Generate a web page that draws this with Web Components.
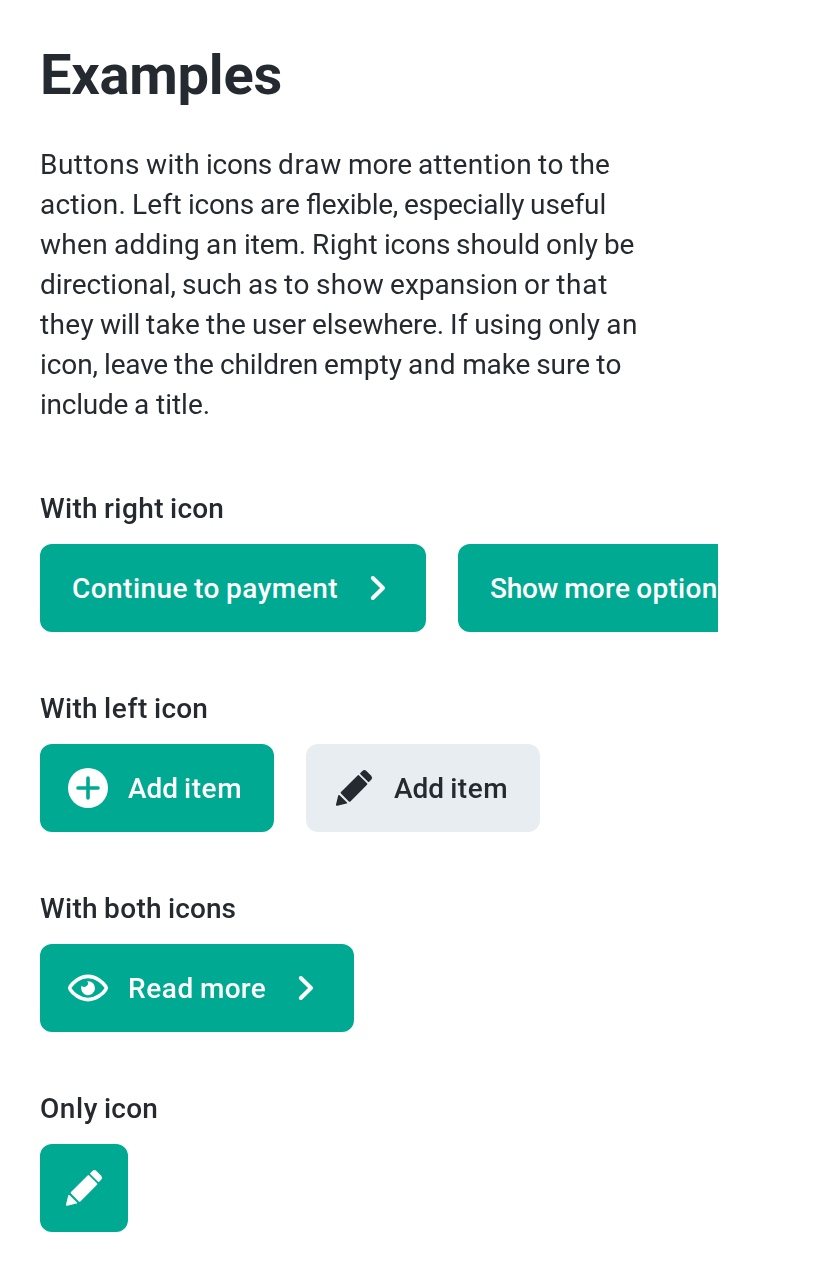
<!DOCTYPE html>
<html lang="en"><head><meta charset="utf-8"><title>Examples</title>
<style>html,body{margin:0;background:#fff}body{font-family:Roboto,sans-serif;color:#252a31;height:1272px;overflow:hidden}</style></head><body>
<examples-page></examples-page>
<script>
const ICONS={
right:'<path d="M9.4 7l5.100 5-5.100 5" fill="none" stroke="currentColor" stroke-width="2" stroke-linecap="round" stroke-linejoin="round"/>',
plus:'<path fill="currentColor" fill-rule="evenodd" d="M12 2a10 10 0 1 0 0 20 10 10 0 0 0 0-20zm.9 9.1H17a.9.9 0 0 1 0 1.8h-4.1V17a.9.9 0 0 1-1.8 0v-4.1H7a.9.9 0 0 1 0-1.8h4.1V7a.9.9 0 0 1 1.8 0z"/>',
edit:'<path fill="currentColor" d="M4.1 15.800q.2-.6.7-.2l3.7 3.6q.4.500-.2.600L3.600 20.900Q2.900 21 3 20.300zM13.800 5.700q.4-.4.8 0l3.900 3.900q.4.4 0 .8l-8.300 8.300q-.4.4-.8 0l-3.900-3.900q-.4-.4 0-.8zM15.200 4.500l1-1q1-.9 2 0l2.400 2.400q.9 1 0 2l-1 1q-.3.3-.6 0l-3.800-3.800q-.3-.3 0-.6z"/>',
eye:'<path d="M3.100 12.700Q2.600 12 3.100 11.300C4.500 9.200 7.800 6.200 12 6.200S19.500 9.200 20.900 11.300Q21.400 12 20.900 12.700C19.500 14.800 16.200 17.800 12 17.800S4.500 14.800 3.100 12.700z" fill="none" stroke="currentColor" stroke-width="1.800" stroke-linejoin="round"/><path fill="currentColor" d="M11.600 8.600A3.500 3.500 0 1 1 8.800 10.700A1.750 1.750 0 0 0 11.600 8.600z"/>'
};
/* Tracks each word so that its glyphs average whole-pixel advances. */
const pen=document.createElement('canvas').getContext('2d');
function fitted(text,font){
  pen.font=font;
  const w=s=>pen.measureText(s).width;
  const advance=g=>g==='e'&&font.startsWith('500')?8:Math.round(w(g));
  return text.split(' ').map(word=>{
    const glyphs=word.match(/fl|./g);
    const sum=glyphs.reduce((t,g)=>t+advance(g),0);
    return `<span style="letter-spacing:${((sum-w(word))/glyphs.length).toFixed(3)}px;font-feature-settings:'liga' 1">${word}</span>`;
  }).join(`<span style="word-spacing:${(Math.round(w(' '))-w(' ')).toFixed(3)}px"> </span>`);
}
class UiIcon extends HTMLElement{connectedCallback(){this.attachShadow({mode:'open'}).innerHTML=`<style>:host{display:block;width:24px;height:24px;flex:none}svg{display:block}</style><svg width="24" height="24" viewBox="0 0 24 24">${ICONS[this.getAttribute('name')]}</svg>`}}
customElements.define('ui-icon',UiIcon);
class UiButton extends HTMLElement{connectedCallback(){const l=this.getAttribute('left'),r=this.getAttribute('right');
if(this.textContent)this.innerHTML=`<span>${fitted(this.textContent,'500 14px Roboto')}</span>`;
this.attachShadow({mode:'open'}).innerHTML=`<style>:host{display:block;flex:none}button{box-sizing:border-box;height:44px;border:0;border-radius:6px;display:flex;align-items:center;background:#00a991;color:#fff;font:500 14px/20px Roboto,sans-serif;white-space:nowrap;padding:0 ${r?'12px':'16px'} 0 ${l?'12px':'16px'}}:host([secondary]) button{background:#e8edf1;color:#252a31}:host([only]) button{padding:0 10px}.l{margin-right:8px}.r{margin-left:8px}:host([only]) .l{margin:0}</style><button title="${this.getAttribute('label')||''}">${l?`<ui-icon class="l" name="${l}"></ui-icon>`:''}<slot></slot>${r?`<ui-icon class="r" name="${r}"></ui-icon>`:''}</button>`}}
customElements.define('ui-button',UiButton);
class ExampleRow extends HTMLElement{connectedCallback(){this.attachShadow({mode:'open'}).innerHTML=`<style>:host{display:block}h2{margin:0 0 8px;font:500 14px/20px Roboto,sans-serif}div{display:flex;gap:16px;overflow:hidden;width:339px}</style><h2>${fitted(this.getAttribute('heading'),'500 14px Roboto')}</h2><div><slot></slot></div>`}}
customElements.define('example-row',ExampleRow);
class ExamplesPage extends HTMLElement{connectedCallback(){this.attachShadow({mode:'open'}).innerHTML=`<style>:host{display:block;box-sizing:border-box;width:410px;height:636px;padding:20px;transform:scale(2);transform-origin:0 0}h1{margin:0;font:700 28px/36px Roboto,sans-serif}p{margin:16px 0 32px;width:300px;font-size:14px;line-height:20px}section{display:grid;gap:28px}</style>
<h1>${fitted('Examples','700 28px Roboto')}</h1><p>${fitted('Buttons with icons draw more attention to the action. Left icons are flexible, especially useful when adding an item. Right icons should only be directional, such as to show expansion or that they will take the user elsewhere. If using only an icon, leave the children empty and make sure to include a title.','400 14px Roboto')}</p>
<section><example-row heading="With right icon"><ui-button right="right">Continue to payment</ui-button><ui-button right="right">Show more options</ui-button></example-row>
<example-row heading="With left icon"><ui-button left="plus">Add item</ui-button><ui-button left="edit" secondary>Add item</ui-button></example-row>
<example-row heading="With both icons"><ui-button left="eye" right="right">Read more</ui-button></example-row>
<example-row heading="Only icon"><ui-button only left="edit" label="Edit"></ui-button></example-row></section>`}}
customElements.define('examples-page',ExamplesPage);
</script></body></html>
